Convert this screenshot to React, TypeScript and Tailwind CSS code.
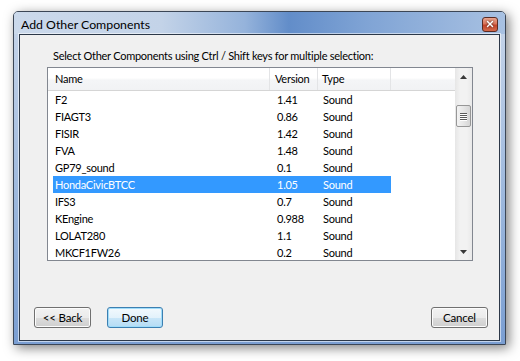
import { X } from 'lucide-react';

const rows = [
  { name: 'F2', version: '1.41', type: 'Sound' },
  { name: 'FIAGT3', version: '0.86', type: 'Sound' },
  { name: 'FISIR', version: '1.42', type: 'Sound' },
  { name: 'FVA', version: '1.48', type: 'Sound' },
  { name: 'GP79_sound', version: '0.1', type: 'Sound' },
  { name: 'HondaCivicBTCC', version: '1.05', type: 'Sound' },
  { name: 'IFS3', version: '0.7', type: 'Sound' },
  { name: 'KEngine', version: '0.988', type: 'Sound' },
  { name: 'LOLAT280', version: '1.1', type: 'Sound' },
  { name: 'MKCF1FW26', version: '0.2', type: 'Sound' },
];

const selected = 'HondaCivicBTCC';

function Button({ label, primary, width }: { label: string; primary?: boolean; width: string }) {
  return (
    <button
      className={
        width +
        ' h-[21px] shrink-0 rounded-[3px] border text-[11.5px] tracking-[-0.2px] leading-none text-black flex items-center justify-center ' +
        (primary
          ? 'border-[#3c7fb1] bg-[linear-gradient(to_bottom,#f2f9fd_0%,#e3f2fb_50%,#c9e6f8_51%,#b5dcf5_100%)] shadow-[inset_0_0_0_1px_#9fdcfa]'
          : 'border-[#707070] bg-[linear-gradient(to_bottom,#f2f2f2_0%,#ebebeb_50%,#dddddd_51%,#cfcfcf_100%)] shadow-[inset_0_0_0_1px_#fcfcfc]')
      }
    >
      {label}
    </button>
  );
}

function Scrollbar() {
  return (
    <div className="w-[17px] h-full flex flex-col items-center bg-[linear-gradient(to_right,#e6e6e6,#f2f2f2_30%,#f2f2f2_70%,#e9e9e9)]">
      <div className="h-[17px] w-full flex items-center justify-center">
        <svg width="7" height="4" viewBox="0 0 7 4">
          <path d="M3.5 0 L7 4 L0 4 Z" fill="#3a3a3a" />
        </svg>
      </div>
      <div className="h-[20px]" />
      <div className="w-[15px] h-[22px] rounded-[2px] border border-[#979797] bg-[linear-gradient(to_right,#f3f3f3,#e6e6e6_50%,#d6d6d6)] flex flex-col items-center justify-center gap-[1px]">
        {[0, 1, 2, 3].map(i => (
          <div key={i} className="w-[7px] h-[1px] bg-[#5a5a5a] shadow-[0_1px_0_#ffffff]" />
        ))}
      </div>
      <div className="flex-1" />
      <div className="h-[17px] w-full flex items-center justify-center">
        <svg width="7" height="4" viewBox="0 0 7 4">
          <path d="M0 0 L7 0 L3.5 4 Z" fill="#3a3a3a" />
        </svg>
      </div>
    </div>
  );
}

export default function App() {
  return (
    <div className="w-[520px] h-[361px] bg-white pl-[13px] pt-[11px] font-['Lato',sans-serif] text-[11px] tracking-[-0.25px] text-black">
      {/* Window */}
      <div className="w-[493px] h-[334px] border border-[#3b4656] rounded-t-[5px] shadow-[3px_3px_12px_rgba(0,0,0,0.5)] bg-[linear-gradient(to_bottom,#c8d6ea,#9ab6dc_60%,#7a9ed2)] flex flex-col px-[5px] pb-[3px]">
        {/* Title bar */}
        <div className="h-[22px] -mx-[5px] px-[7px] flex items-center justify-between rounded-t-[4px] bg-[linear-gradient(to_right,#cbd9eb_0%,#c3d3e8_30%,#95b3db_47%,#628dc9_56%,#80a4d5_72%,#a8c1e2_100%)]">
          <span className="text-[12.3px] tracking-normal leading-none pt-[4px]">Add Other Components</span>
          <div className="w-[16px] h-[15px] mt-[2px] rounded-[3px] border border-[#5a2c24] bg-[linear-gradient(to_bottom,#eaa58f_0%,#d9745a_45%,#c3432a_55%,#d36a4b_100%)] flex items-center justify-center">
            <X size={10} strokeWidth={3.5} className="text-white drop-shadow-[0_0_1px_#3a1a14]" />
          </div>
        </div>

        {/* Client area */}
        <div className="flex-1 border border-[#2c3848] shadow-[0_0_0_1px_rgba(255,255,255,0.55)] bg-[#f0f0f0] flex flex-col">
          <div className="h-[32px] pl-[33px] pt-[13px] leading-[16px]">
            Select Other Components using Ctrl / Shift keys for multiple selection:
          </div>

          {/* List box */}
          <div className="ml-[27px] w-[426px] h-[194px] border border-[#828790] bg-white flex">
            <div className="flex-1 flex flex-col overflow-hidden">
              <div className="h-[23px] flex border-b border-[#d5d5d5] bg-[linear-gradient(to_bottom,#ffffff_0%,#ffffff_45%,#f4f5f7_55%,#f1f2f4_100%)]">
                <div className="w-[222px] pl-[7px] flex items-center border-r border-[#e3e4e6]">Name</div>
                <div className="w-[48px] pl-[5px] flex items-center border-r border-[#e3e4e6]">Version</div>
                <div className="w-[73px] pl-[4px] flex items-center border-r border-[#e3e4e6]">Type</div>
                <div className="flex-1" />
              </div>
              <div className="flex-1 overflow-hidden pl-[5px]">
                {rows.map(r => {
                  const sel = r.name === selected;
                  return (
                    <div
                      key={r.name}
                      className={'h-[17px] w-[338px] flex items-center pt-[1px] ' + (sel ? 'bg-[#3399ff] text-white' : '')}
                    >
                      <div className="w-[218px] pl-[2px]">{r.name}</div>
                      <div className="w-[47px] pl-[6px]">{r.version}</div>
                      <div className="w-[73px] pl-[5px]">{r.type}</div>
                    </div>
                  );
                })}
              </div>
            </div>
            <Scrollbar />
          </div>

          <div className="flex-1" />

          {/* Buttons */}
          <div className="flex items-center pl-[14px] pr-[11px] pb-[12px]">
            <Button label="<< Back" width="w-[57px]" />
            <div className="w-[16px] shrink-0" />
            <Button label="Done" primary width="w-[56px]" />
            <div className="flex-1" />
            <Button label="Cancel" width="w-[57px]" />
          </div>
        </div>
      </div>
    </div>
  );
}
